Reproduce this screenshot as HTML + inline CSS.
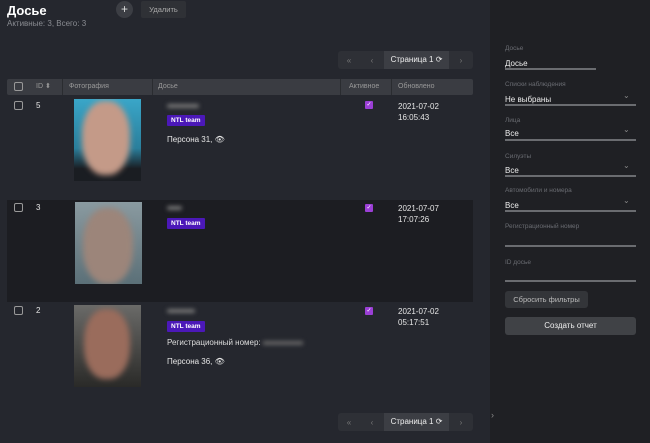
<!DOCTYPE html><html><head><meta charset="utf-8"><style>
*{box-sizing:border-box;margin:0;padding:0}
body{width:650px;height:443px;background:#25272e;font-family:"Liberation Sans",sans-serif;color:#e6e6e6;position:relative;overflow:hidden;font-size:8px}
.a{position:absolute}
.side{left:490px;top:0;width:160px;height:443px;background:#1f2024}
.lbl{font-size:6.5px;color:#6a6c72}
.val{font-size:8px;color:#eee}
.line{height:2px;background:#6a6c70}
.pg{width:135px;height:18px;background:#2e3036;border-radius:3px;display:flex;align-items:center;font-size:8px;color:#777}
.pg span{display:inline-block;text-align:center}
.cb{width:9px;height:9px;border:1px solid #999;border-radius:2px}
.chk{width:8px;height:8px;background:#9b3fd6;border-radius:1px;color:#fff;font-size:6px;line-height:8px;text-align:center}
.tag{background:#4b18b8;color:#fff;font-size:6.5px;font-weight:bold;padding:2px 4px;border-radius:1px}
.blur{background:#777;filter:blur(2px);height:4px;border-radius:2px}
.photo{width:67px;height:82px;overflow:hidden}
.face{position:absolute;filter:blur(3px);border-radius:45%}
</style></head><body>
<div class="a" style="left:7px;top:3px;font-size:13px;font-weight:bold;color:#fff">Досье</div>
<div class="a" style="left:7px;top:19px;font-size:8px;color:#8a8c92">Активные: 3, Всего: 3</div>
<div class="a" style="left:116px;top:1px;width:17px;height:17px;border-radius:50%;background:#3c3e44;color:#ddd;font-size:12px;text-align:center;line-height:16px">+</div>
<div class="a" style="left:141px;top:1px;width:45px;height:17px;border-radius:2px;background:#2f3136;color:#aaa;font-size:7.5px;text-align:center;line-height:17px">Удалить</div>

<div class="a pg" style="left:338px;top:51px"><span style="width:22px">«</span><span style="width:24px">‹</span><span style="width:65px;background:#3c3e44;height:18px;line-height:18px;color:#eee">Страница 1 ⟳</span><span style="width:24px">›</span></div>
<div class="a pg" style="left:338px;top:413px"><span style="width:22px">«</span><span style="width:24px">‹</span><span style="width:65px;background:#3c3e44;height:18px;line-height:18px;color:#eee">Страница 1 ⟳</span><span style="width:24px">›</span></div>

<div class="a" style="left:7px;top:79px;width:466px;height:16px;background:#3a3c42;border-radius:2px;font-size:7px;color:#999;line-height:16px">
<div class="a cb" style="left:7px;top:3px"></div>
<span class="a" style="left:29px">ID ⬍</span><span class="a" style="left:55px;border-left:1px solid #2a2c30;padding-left:6px;height:16px">Фотография</span>
<span class="a" style="left:145px;border-left:1px solid #2a2c30;padding-left:5px;height:16px;width:195px">Досье</span>
<span class="a" style="left:333px;border-left:1px solid #2a2c30;padding-left:8px;height:16px;width:58px">Активное</span>
<span class="a" style="left:384px;border-left:1px solid #2a2c30;padding-left:6px;height:16px">Обновлено</span></div>

<div class="a" style="left:7px;top:200px;width:466px;height:102px;background:#1c1d22"></div>

<div class="a cb" style="left:14px;top:101px"></div><div class="a" style="left:36px;top:101px;font-size:8px">5</div>
<div class="a photo" style="left:74px;top:99px;background:linear-gradient(#3aa6c8,#2a7f9c 60%,#1a1d22 85%)"><div class="face" style="left:8px;top:2px;width:48px;height:74px;background:#c49a88"></div></div>
<div class="a blur" style="left:167px;top:104px;width:32px"></div>
<div class="a tag" style="left:167px;top:115px">NTL team</div>
<div class="a" style="left:167px;top:135px;font-size:8px">Персона 31, 👁</div>
<div class="a chk" style="left:365px;top:101px">✓</div>
<div class="a" style="left:398px;top:101px;font-size:8px;line-height:11px">2021-07-02<br>16:05:43</div>

<div class="a cb" style="left:14px;top:203px"></div><div class="a" style="left:36px;top:203px;font-size:8px">3</div>
<div class="a photo" style="left:75px;top:202px;background:linear-gradient(#8a9aa0,#5b7078)"><div class="face" style="left:8px;top:6px;width:50px;height:76px;background:#9c857a"></div></div>
<div class="a blur" style="left:167px;top:206px;width:15px"></div>
<div class="a tag" style="left:167px;top:218px">NTL team</div>
<div class="a chk" style="left:365px;top:204px">✓</div>
<div class="a" style="left:398px;top:203px;font-size:8px;line-height:11px">2021-07-07<br>17:07:26</div>

<div class="a cb" style="left:14px;top:306px"></div><div class="a" style="left:36px;top:306px;font-size:8px">2</div>
<div class="a photo" style="left:74px;top:305px;background:linear-gradient(#6a6a68,#2a2a28)"><div class="face" style="left:10px;top:4px;width:46px;height:70px;background:#9a6c5c"></div></div>
<div class="a blur" style="left:167px;top:309px;width:28px"></div>
<div class="a tag" style="left:167px;top:321px">NTL team</div>
<div class="a" style="left:167px;top:338px;font-size:8px;color:#ddd">Регистрационный номер: <span style="display:inline-block;width:40px;height:4px;background:#666;filter:blur(2px)"></span></div>
<div class="a" style="left:167px;top:357px;font-size:8px">Персона 36, 👁</div>
<div class="a chk" style="left:365px;top:307px">✓</div>
<div class="a" style="left:398px;top:306px;font-size:8px;line-height:11px">2021-07-02<br>05:17:51</div>

<div class="a side">
<div class="a lbl" style="left:15px;top:45px">Досье</div><div class="a val" style="left:15px;top:59px">Досье</div><div class="a line" style="left:15px;top:68px;width:91px"></div>
<div class="a lbl" style="left:15px;top:81px">Списки наблюдения</div><div class="a val" style="left:15px;top:95px">Не выбраны</div><div class="a" style="left:133px;top:91px;color:#888">⌄</div><div class="a line" style="left:15px;top:104px;width:131px"></div>
<div class="a lbl" style="left:15px;top:117px">Лица</div><div class="a val" style="left:15px;top:129px">Все</div><div class="a" style="left:133px;top:125px;color:#888">⌄</div><div class="a line" style="left:15px;top:139px;width:131px"></div>
<div class="a lbl" style="left:15px;top:153px">Силуэты</div><div class="a val" style="left:15px;top:166px">Все</div><div class="a" style="left:133px;top:161px;color:#888">⌄</div><div class="a line" style="left:15px;top:175px;width:131px"></div>
<div class="a lbl" style="left:15px;top:187px">Автомобили и номера</div><div class="a val" style="left:15px;top:201px">Все</div><div class="a" style="left:133px;top:196px;color:#888">⌄</div><div class="a line" style="left:15px;top:210px;width:131px"></div>
<div class="a lbl" style="left:15px;top:223px">Регистрационный номер</div><div class="a line" style="left:15px;top:245px;width:131px"></div>
<div class="a lbl" style="left:15px;top:259px">ID досье</div><div class="a line" style="left:15px;top:280px;width:131px"></div>
<div class="a" style="left:15px;top:291px;width:83px;height:17px;background:#333539;border-radius:3px;color:#bbb;font-size:7.5px;text-align:center;line-height:17px">Сбросить фильтры</div>
<div class="a" style="left:15px;top:317px;width:131px;height:18px;background:#404246;border-radius:3px;color:#eee;font-size:8px;text-align:center;line-height:18px">Создать отчет</div>
<div class="a" style="left:1px;top:410px;color:#888;font-size:9px">›</div>
</div>
</body></html>
